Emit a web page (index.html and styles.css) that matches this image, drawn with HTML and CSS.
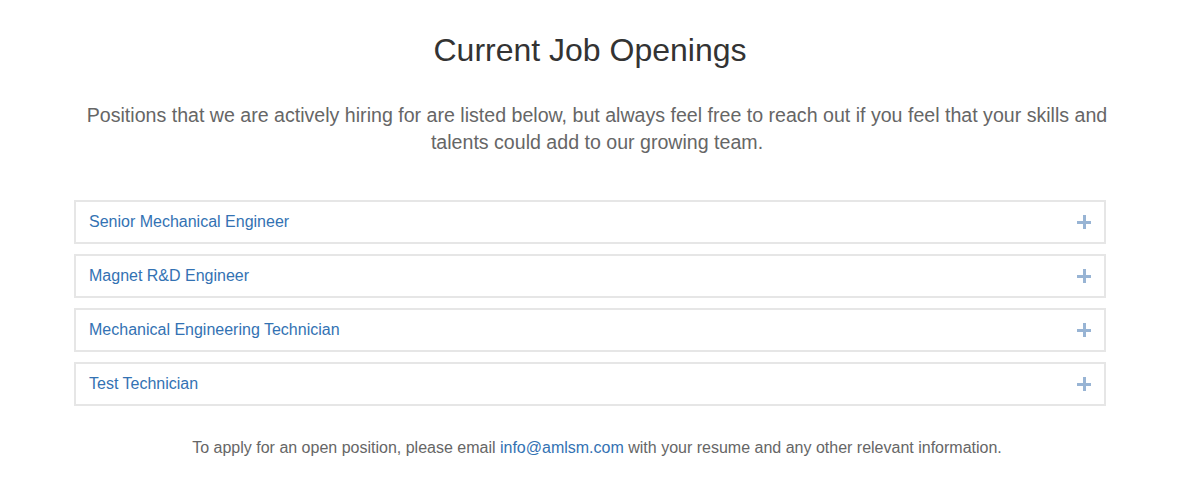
FILE: index.html
```html
<!DOCTYPE html>
<html>
<head>
<meta charset="utf-8">
<link rel="stylesheet" href="styles.css">
</head>
<body>
<main class="page">
  <h1 class="title">Current Job Openings</h1>
  <p class="intro">Positions that we are actively hiring for are listed below, but always feel free to reach out if you feel that your skills and talents could add to our growing team.</p>
  <div class="jobs">
    <div class="job"><span class="job-name">Senior Mechanical Engineer</span><span class="plus"></span></div>
    <div class="job"><span class="job-name">Magnet R&amp;D Engineer</span><span class="plus"></span></div>
    <div class="job"><span class="job-name">Mechanical Engineering Technician</span><span class="plus"></span></div>
    <div class="job"><span class="job-name">Test Technician</span><span class="plus"></span></div>
  </div>
  <p class="apply">To apply for an open position, please email <a class="mail" href="#">info@amlsm.com</a> with your resume and any other relevant information.</p>
</main>
</body>
</html>
```
FILE: styles.css
```css
html, body {
  margin: 0;
  padding: 0;
  background: #fff;
}
body {
  font-family: "Liberation Sans", Arial, sans-serif;
}
.page {
  width: 1180px;
  display: flex;
  flex-direction: column;
  align-items: center;
}
.title {
  margin: 30px 0 0;
  font-size: 32px;
  font-weight: normal;
  line-height: 40px;
  color: #333;
}
.intro {
  margin: 32px 0 0;
  padding-left: 14px;
  width: 1040px;
  font-size: 19.6px;
  line-height: 27px;
  color: #666;
  text-align: center;
}
.jobs {
  margin-top: 44px;
  width: 1032px;
  display: flex;
  flex-direction: column;
  gap: 10px;
}
.job {
  height: 44px;
  box-sizing: border-box;
  border: 2px solid #e6e6e6;
  display: flex;
  align-items: center;
  justify-content: space-between;
  padding: 0 13px 0 13px;
}
.job-name {
  font-size: 16px;
  color: #3372b3;
}
.plus {
  position: relative;
  width: 14px;
  height: 14px;
}
.plus::before, .plus::after {
  content: "";
  position: absolute;
  background: #98b4d4;
}
.plus::before {
  left: 0;
  top: 6px;
  width: 14px;
  height: 2.5px;
}
.plus::after {
  left: 6px;
  top: 0;
  width: 2.5px;
  height: 14px;
}
.apply {
  margin: 30px 0 0;
  padding-left: 14px;
  font-size: 16px;
  line-height: 24px;
  color: #666;
  text-align: center;
}
.mail {
  color: #3372b3;
  text-decoration: none;
}
```
